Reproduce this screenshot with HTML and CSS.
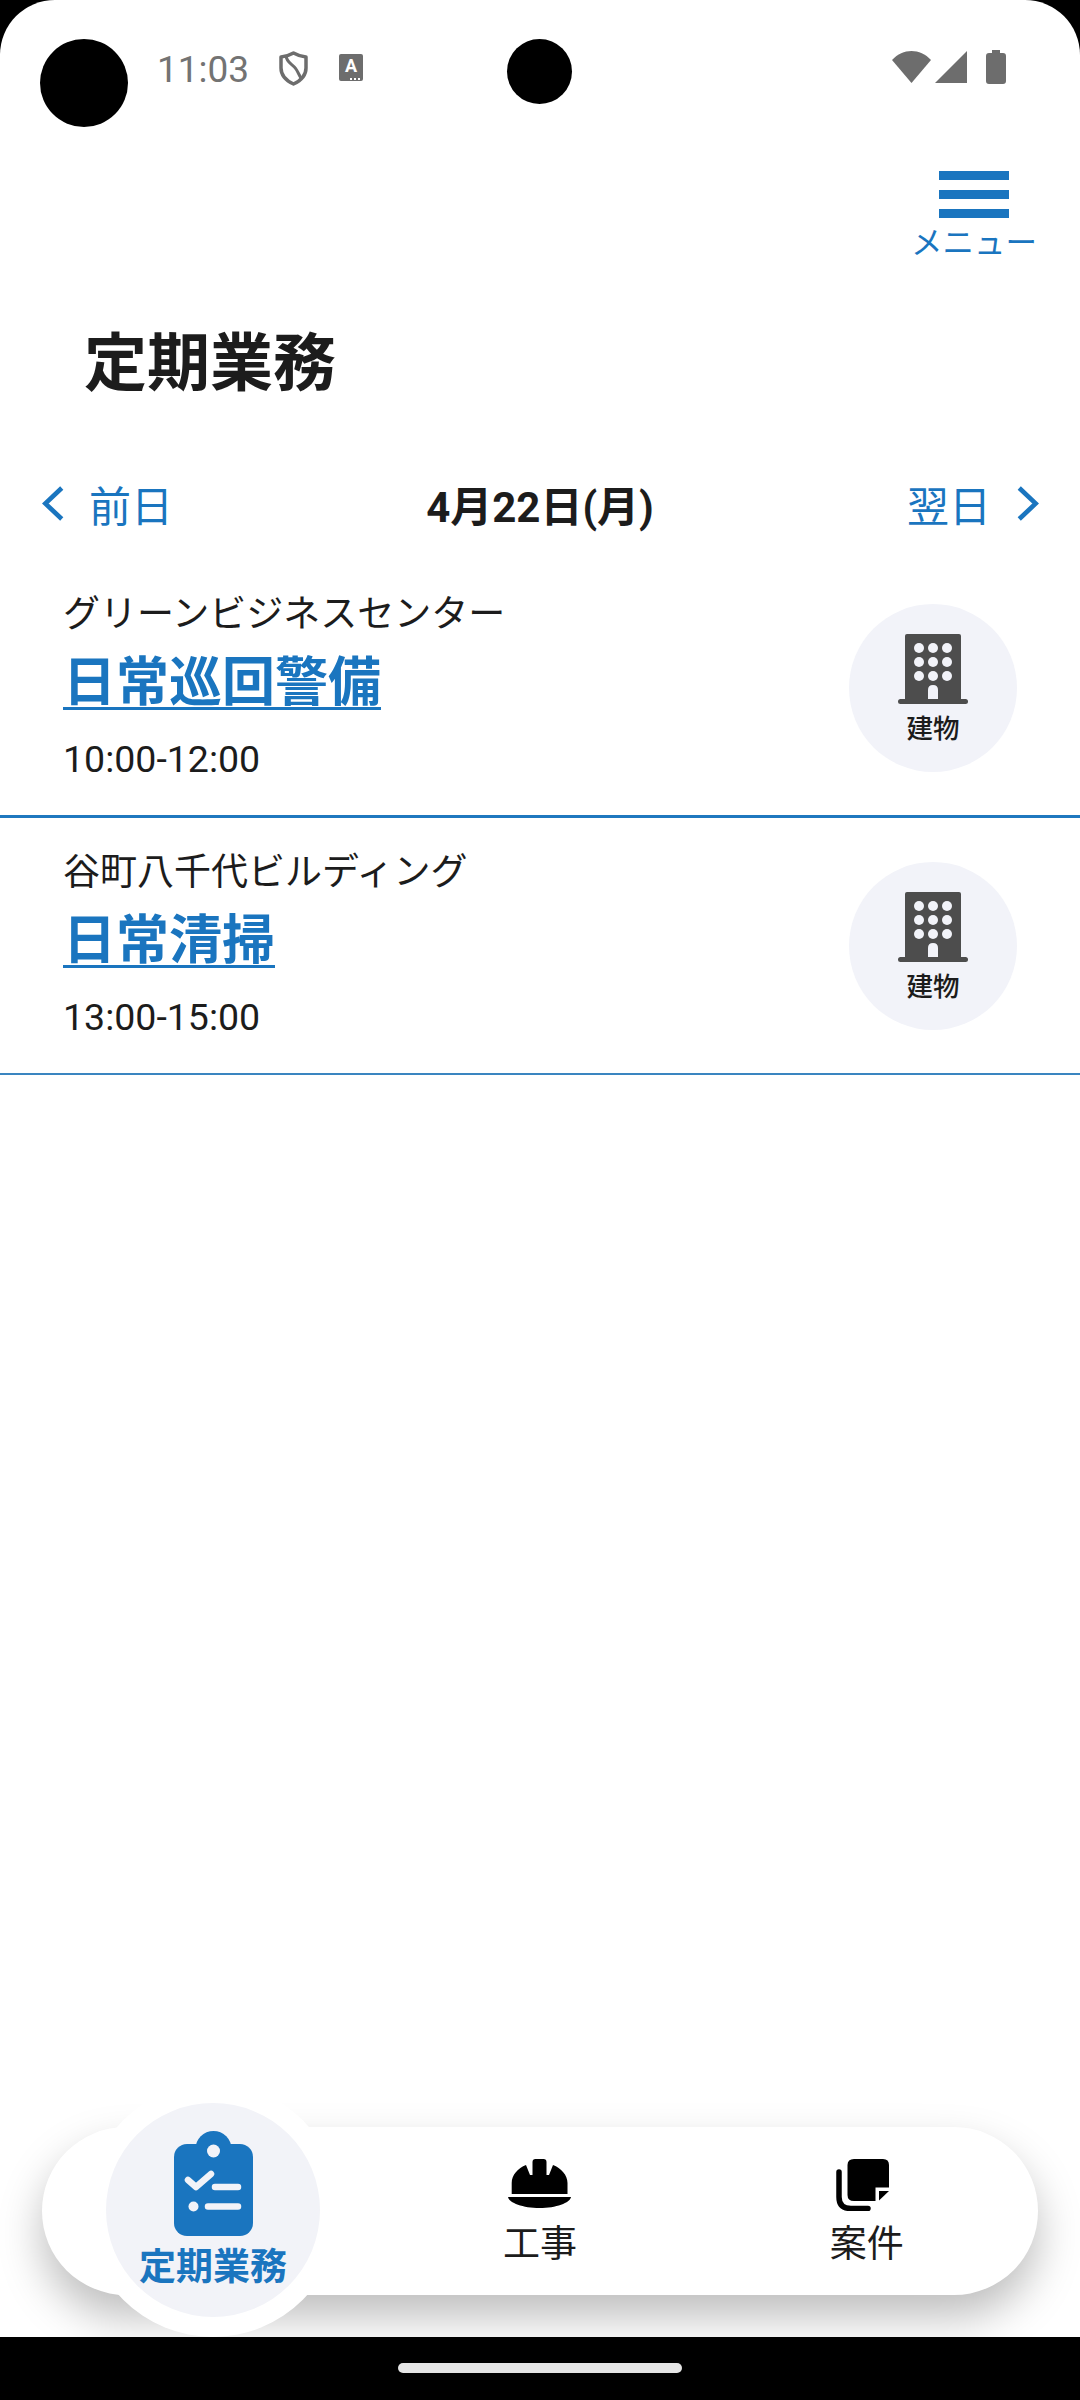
FILE: index.html
```html
<!DOCTYPE html>
<html lang="ja">
<head>
    <meta charset="UTF-8">
    <meta name="viewport" content="width=device-width, initial-scale=1.0">
    <title>定期業務</title>
    <link rel="stylesheet" href="styles.css">
</head>
<body>
    <div class="screen">
        <div class="camera camera-left"></div>
        <div class="camera camera-mid"></div>

        <div class="status">
            <span class="clock">11:03</span>
            <svg class="ico-shield" viewBox="0 0 29 35">
                <path d="M14.5 2 C18 4 22 5.5 27 6 V17 C27 25 21 30 14.5 33 C8 30 2 25 2 17 V6 C7 5.5 11 4 14.5 2 Z" fill="none" stroke="#6d6d6d" stroke-width="3.5" stroke-linejoin="round"/>
                <path d="M7 4 C7 12 14 13 17 18 C19 21 20 24 22 27" fill="none" stroke="#6d6d6d" stroke-width="3"/>
            </svg>
            <div class="ico-a"><span>A</span><i></i></div>
            <div class="status-right">
                <svg class="ico-wifi" viewBox="0 0 39 32"><path d="M0 9 C11 -3 28 -3 39 9 L19.5 32 Z" fill="#6d6d6d"/></svg>
                <svg class="ico-signal" viewBox="0 0 32 32"><path d="M0 32 H32 V0 Z" fill="#6d6d6d"/></svg>
                <svg class="ico-battery" viewBox="0 0 20 34"><path d="M6 0 H14 V3 H17 Q20 3 20 6 V31 Q20 34 17 34 H3 Q0 34 0 31 V6 Q0 3 3 3 H6 Z" fill="#6d6d6d"/></svg>
            </div>
        </div>

        <div class="menu">
            <div class="burger"><b></b><b></b><b></b></div>
            <span class="menu-label">メニュー</span>
        </div>

        <h1 class="title">定期業務</h1>

        <div class="daynav">
            <a class="day-link">
                <svg class="chev" viewBox="0 0 21 34"><path d="M19 2 L3 17 L19 32" fill="none" stroke="#1a75bf" stroke-width="4.5"/></svg>
                前日
            </a>
            <span class="day-now">4月22日(月)</span>
            <a class="day-link">
                翌日
                <svg class="chev" viewBox="0 0 21 34"><path d="M2 2 L18 17 L2 32" fill="none" stroke="#1a75bf" stroke-width="4.5"/></svg>
            </a>
        </div>

        <div class="row">
            <div class="row-text">
                <div class="place">グリーンビジネスセンター</div>
                <a class="job">日常巡回警備</a>
                <div class="time">10:00-12:00</div>
            </div>
            <div class="badge">
                <svg class="ico-building" viewBox="0 0 70 70">
                    <use href="#building"/>
                </svg>
                <span>建物</span>
            </div>
        </div>
        <div class="row row-thin">
            <div class="row-text">
                <div class="place">谷町八千代ビルディング</div>
                <a class="job">日常清掃</a>
                <div class="time">13:00-15:00</div>
            </div>
            <div class="badge">
                <svg class="ico-building" viewBox="0 0 70 70">
                    <use href="#building"/>
                </svg>
                <span>建物</span>
            </div>
        </div>

        <div class="tabbar">
            <div class="tab tab-on">
                <div class="halo">
                    <div class="halo-in">
                        <svg class="ico-clip" viewBox="0 0 79 105">
                            <circle cx="39.5" cy="18" r="18" fill="#1a75bf"/>
                            <rect x="0" y="13" width="79" height="92" rx="13" fill="#1a75bf"/>
                            <circle cx="39.5" cy="20" r="6.5" fill="#f2f3f8"/>
                            <path d="M14 49 L22 56 L37 43" fill="none" stroke="#f2f3f8" stroke-width="6.5" stroke-linecap="round" stroke-linejoin="round"/>
                            <path d="M41 56 H64 M34 75.5 H64" fill="none" stroke="#f2f3f8" stroke-width="6.5" stroke-linecap="round"/>
                            <circle cx="19.5" cy="75.5" r="5" fill="#f2f3f8"/>
                        </svg>
                        <span>定期業務</span>
                    </div>
                </div>
            </div>
            <div class="tab">
                <svg class="ico-helmet" viewBox="0 0 63 49">
                    <path d="M3.7 35 V24 C3.7 16 10 9 18 6 L22 16 H24.5 V3 Q24.5 0 27.5 0 H35.5 Q38.5 0 38.5 3 V16 H41 L45 6 C53 9 59.5 16 59.5 24 V35 Z" fill="#000"/>
                    <path d="M0 38 H63 C62 44 48 49 31.5 49 C15 49 1 44 0 38 Z" fill="#000"/>
                </svg>
                <span>工事</span>
            </div>
            <div class="tab">
                <svg class="ico-docs" viewBox="0 0 53 52">
                    <path d="M11.5 6 Q11.5 0 18 0 H47 Q53 0 53 6 V28.5 H39.5 V42 H18 Q11.5 42 11.5 36 Z" fill="#000"/>
                    <path d="M43 32 H53 L43 41.5 Z" fill="#000"/>
                    <path d="M3 13 V38 Q3 49.5 15 49.5 H32" fill="none" stroke="#000" stroke-width="5.5" stroke-linecap="round"/>
                </svg>
                <span>案件</span>
            </div>
        </div>
    </div>

    <div class="navbar"><div class="pill"></div></div>

    <svg class="defs" width="0" height="0">
        <symbol id="building" viewBox="0 0 70 70">
            <path d="M7 2 Q7 0 9 0 H61 Q63 0 63 2 V66 H7 Z" fill="#4d4d4d"/>
            <rect x="0" y="65" width="70" height="5" rx="2.5" fill="#4d4d4d"/>
            <g fill="#f2f3f9">
                <circle cx="21" cy="14" r="5"/><circle cx="35" cy="14" r="5"/><circle cx="49" cy="14" r="5"/>
                <circle cx="21" cy="28" r="5"/><circle cx="35" cy="28" r="5"/><circle cx="49" cy="28" r="5"/>
                <circle cx="21" cy="42" r="5"/><circle cx="35" cy="42" r="5"/><circle cx="49" cy="42" r="5"/>
                <path d="M30 56 Q30 51 35 51 Q40 51 40 56 V65 H30 Z"/>
            </g>
        </symbol>
    </svg>
</body>
</html>
```

FILE: styles.css
```css
* {
    margin: 0;
    padding: 0;
    box-sizing: border-box;
}
html, body {
    width: 1080px;
    height: 2400px;
    overflow: hidden;
    background-color: #000;
    font-family: "Roboto", "Noto Sans CJK JP", sans-serif;
    color: #1c1c1c;
}
.defs {
    position: absolute;
}
.screen {
    position: relative;
    height: 2337px;
    background-color: #fff;
    border-radius: 55px 55px 0 0;
    overflow: hidden;
}

/* camera holes */
.camera {
    position: absolute;
    background-color: #000;
    border-radius: 50%;
}
.camera-left {
    left: 40px;
    top: 39px;
    width: 88px;
    height: 88px;
}
.camera-mid {
    left: 507px;
    top: 39px;
    width: 65px;
    height: 65px;
}

/* status bar */
.status {
    display: flex;
    align-items: center;
    height: 138px;
    padding: 0 74px 4px 157px;
}
.clock {
    margin-top: 4px;
    font-size: 37px;
    color: #737373;
    width: 122px;
}
.ico-shield {
    width: 29px;
    height: 35px;
    margin-top: 2px;
}
.ico-a {
    position: relative;
    width: 24px;
    height: 27px;
    margin-left: 31px;
    background-color: #6d6d6d;
    border-radius: 2px;
    color: #fff;
    font-size: 18px;
    font-weight: 700;
    line-height: 23px;
    text-align: center;
}
.ico-a i {
    position: absolute;
    right: 3px;
    bottom: 1px;
    width: 10px;
    height: 2px;
    border-top: 2px dotted #fff;
}
.status-right {
    display: flex;
    align-items: center;
    margin-left: auto;
}
.ico-wifi {
    width: 39px;
    height: 32px;
}
.ico-signal {
    width: 32px;
    height: 32px;
    margin-left: 4px;
}
.ico-battery {
    width: 20px;
    height: 34px;
    margin-left: 19px;
}

/* menu */
.menu {
    display: flex;
    flex-direction: column;
    align-items: center;
    width: 130px;
    margin: 33px 41px 0 auto;
}
.burger {
    display: flex;
    flex-direction: column;
    gap: 10px;
    width: 70px;
}
.burger b {
    display: block;
    height: 9px;
    background-color: #1a75bf;
}
.menu-label {
    margin-top: 4px;
    font-size: 31.5px;
    line-height: 44px;
    color: #1a75bf;
    white-space: nowrap;
}

.title {
    margin: 53px 0 0 84px;
    font-size: 63px;
    font-weight: 700;
    line-height: 90px;
}

/* prev / next */
.daynav {
    display: flex;
    justify-content: space-between;
    align-items: center;
    height: 80px;
    margin-top: 54px;
    padding: 0 41px 0 42px;
}
.day-link {
    display: flex;
    align-items: center;
    gap: 25px;
    font-size: 42px;
    color: #1a75bf;
}
.day-link:last-child {
    gap: 26px;
}
.chev {
    width: 22px;
    height: 35px;
}
.day-now {
    font-size: 42px;
    font-weight: 700;
}

/* rows */
.row {
    display: flex;
    justify-content: space-between;
    align-items: center;
    height: 258px;
    margin-top: 17px;
    padding: 0 63px;
    border-bottom: 3px solid #1f78bf;
}
.row-thin {
    height: 257px;
    margin-top: 0;
    border-bottom: 2px solid #3a85c0;
}
.row-text {
    padding-bottom: 1px;
}
.place {
    font-size: 37px;
    line-height: 50px;
}
.job {
    display: block;
    margin-top: 7px;
    font-size: 53px;
    font-weight: 700;
    line-height: 72px;
    color: #1a75bf;
    text-decoration: underline;
    text-decoration-thickness: 3px;
    text-underline-offset: 6px;
}
.time {
    margin-top: 15px;
    font-size: 37.5px;
    line-height: 50px;
}
.badge {
    display: flex;
    flex-direction: column;
    align-items: center;
    justify-content: flex-start;
    width: 168px;
    height: 168px;
    padding-top: 30px;
    background-color: #f2f3f9;
    border-radius: 50%;
    font-size: 26.5px;
    font-weight: 500;
    line-height: 40px;
}
.badge span {
    margin-top: 5px;
}
.ico-building {
    width: 70px;
    height: 70px;
    flex-shrink: 0;
}

/* floating tab bar */
.tabbar {
    position: absolute;
    left: 42px;
    right: 42px;
    bottom: 42px;
    display: grid;
    grid-template-columns: repeat(3, 1fr);
    height: 168px;
    padding: 0 8px;
    background-color: #fff;
    border-radius: 84px;
    box-shadow: 0 22px 44px rgba(0, 0, 0, 0.26);
}
.tab {
    position: relative;
    display: flex;
    flex-direction: column;
    align-items: center;
    padding-top: 32px;
    font-size: 37px;
    line-height: 50px;
}
.tab svg {
    flex-shrink: 0;
}
.ico-helmet {
    width: 63px;
    height: 49px;
    margin-bottom: 12px;
}
.ico-docs {
    width: 53px;
    height: 52px;
    margin: 0 8px 9px 0;
}
.halo {
    position: absolute;
    left: 36px;
    top: -44px;
    width: 254px;
    height: 254px;
    padding: 20px;
    background-color: #fff;
    border-radius: 50%;
}
.halo-in {
    display: flex;
    flex-direction: column;
    align-items: center;
    width: 214px;
    height: 214px;
    padding-top: 28px;
    background-color: #f2f3f8;
    border-radius: 50%;
    color: #1a75bf;
    font-size: 37px;
    font-weight: 700;
    line-height: 50px;
    white-space: nowrap;
}
.ico-clip {
    width: 79px;
    height: 105px;
    margin-bottom: 7px;
}

.navbar {
    display: flex;
    justify-content: center;
    padding-top: 26px;
    height: 63px;
    background-color: #000;
}
.pill {
    width: 284px;
    height: 10px;
    background-color: #e5e5e5;
    border-radius: 5px;
}
```
